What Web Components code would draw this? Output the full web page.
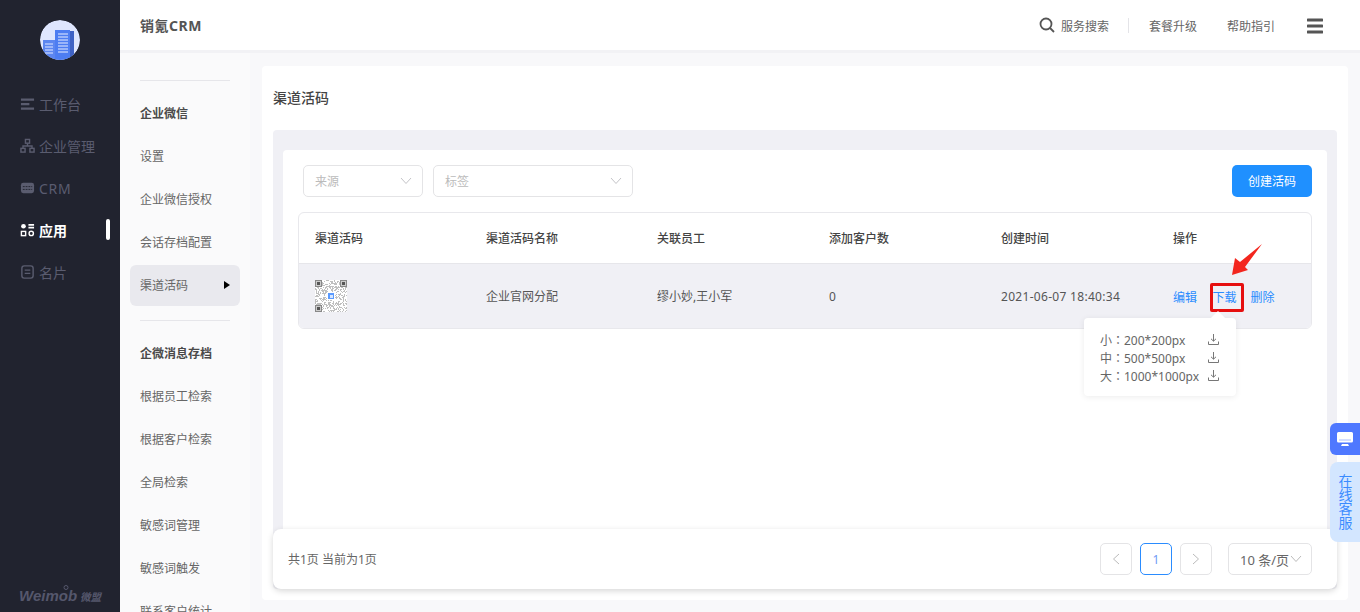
<!DOCTYPE html>
<html lang="zh-CN">
<head>
<meta charset="utf-8">
<title>渠道活码</title>
<style>
html, body { margin: 0; height: 612px; overflow: hidden; }
body { font-family: "Noto Sans", "Noto Sans CJK SC", sans-serif; font-size: 12px; color: #666; }
</style>
</head>
<body>
<crm-app></crm-app>
<script>
const navItems = [
    { text: "工作台", icon: '<path d="M1 2h14v2.4H1zM1 6.8h9v2.4H1zM1 11.600h14V14H1z" fill="currentColor"/>' },
    { text: "企业管理", icon: '<g fill="none" stroke="currentColor" stroke-width="1.5"><rect x="5.800" y="1" width="4.400" height="4"/><rect x="1" y="10.500" width="4.400" height="4"/><rect x="10.600" y="10.500" width="4.400" height="4"/><path d="M8 5v3M3.200 10.500V8h9.600v2.500"/></g>' },
    { text: "CRM", latin: true, icon: '<rect x="1" y="2.500" width="14" height="11" rx="2.500" fill="currentColor"/><path d="M3 6.500h10M3 9.500h10" stroke="#21232f" stroke-width="1" stroke-dasharray="2 1"/>' },
    { text: "应用", active: true, icon: '<g fill="none" stroke="currentColor" stroke-width="1.500"><rect x="1.500" y="9.500" width="4.500" height="4.500"/><circle cx="12" cy="11.700" r="2.300"/></g><circle cx="3.700" cy="4" r="2.500" fill="currentColor"/><path d="M9 2.500h6M9 5.500h6" stroke="currentColor" stroke-width="1.800"/>' },
    { text: "名片", icon: '<rect x="2" y="1.500" width="12" height="13" rx="2.500" fill="none" stroke="currentColor" stroke-width="1.500"/><path d="M5 6h6M5 9.500h6" stroke="currentColor" stroke-width="1.500"/>' }
];

class CrmSidebar extends HTMLElement {
    constructor() {
        super();
        this.attachShadow({ mode: 'open' });
        this.shadowRoot.innerHTML = `
            <style>
                :host { display: flex; flex-direction: column; width: 120px; flex: none; height: 612px; background: #21232f; position: relative; }
                .logo { width: 40px; height: 40px; margin: 20px 0 0 40px; border-radius: 50%; display: block; }
                nav { display: flex; flex-direction: column; margin-top: 23px; }
                .item { height: 42px; display: flex; align-items: center; gap: 4px; padding-left: 20px; color: #5a5c6f; font-size: 14px; position: relative; }
                .item svg { width: 15px; height: 16px; flex: none; }
                .latin { letter-spacing: .7px; }
                .active { color: #fff; font-weight: 700; }
                .active::after { content: ""; position: absolute; left: 106px; top: 10px; width: 4px; height: 21px; border-radius: 2px; background: #fff; }
                .brand { margin: auto 0 7px 19px; color: #55576c; display: flex; align-items: baseline; gap: 3px; font-style: italic; font-weight: 700; line-height: 16px; }
                .brand b { font-family: "Liberation Sans", sans-serif; font-size: 15px; }
                .brand span { font-size: 10.500px; }
                .drop { position: absolute; left: 63px; top: 584px; }
            </style>
            <svg class="logo" viewBox="0 0 40 40">
                <defs><clipPath id="c"><circle cx="20" cy="20" r="20"/></clipPath></defs>
                <g clip-path="url(#c)">
                    <rect width="40" height="40" fill="#dfe6fe"/>
                    <rect x="3" y="20" width="12" height="20" fill="#5c86f0"/>
                    <rect x="15" y="10" width="15" height="30" fill="#4d7df2"/>
                    <rect x="30" y="11" width="4" height="29" fill="#3f62c4"/>
                    <path d="M5 24h8M5 27h8M5 30h8M5 33h8M18 14h10M18 17h10M18 20h10M18 23h10M18 26h10M18 29h10M18 32h10" stroke="#b4c8fb" stroke-width="1.500"/>
                </g>
            </svg>
            <nav>${navItems.map(n => `
                <div class="item ${n.active ? 'active' : ''}"><svg viewBox="0 0 16 16">${n.icon}</svg><span class="${n.latin ? 'latin' : ''}">${n.text}</span></div>`).join('')}
            </nav>
            <div class="brand"><b>Weimob</b><span>微盟</span></div>
            <svg class="drop" width="6" height="6" viewBox="0 0 6 6" fill="none" stroke="#55576c"><circle cx="3" cy="3.500" r="2"/></svg>
        `;
    }
}

class CrmTopbar extends HTMLElement {
    constructor() {
        super();
        this.attachShadow({ mode: 'open' });
        this.shadowRoot.innerHTML = `
            <style>
                :host { display: flex; align-items: center; height: 50px; flex: none; background: #fff; border-bottom: 3px solid #f2f2f5; box-sizing: content-box; padding: 0 37px 0 20px; color: #666; }
                .name { font-size: 14px; font-weight: 700; color: #555; margin-right: auto; letter-spacing: .5px; margin-top: -1px; }
                .search { display: flex; align-items: center; gap: 6px; padding-right: 19px; border-right: 1px solid #e4e4e8; height: 15px; }
                .link { margin-left: 20px; }
                .link + .link { margin-left: 30px; }
                .search span, .link { position: relative; top: 1px; }
                .menu { width: 16px; height: 16px; margin-left: 32px; margin-top: 2px; }
                svg { display: block; }
            </style>
            <span class="name">销氪CRM</span>
            <div class="search">
                <svg width="16" height="16" viewBox="0 0 16 16" fill="none" stroke="#555" stroke-width="1.800"><circle cx="7" cy="7" r="5.500"/><path d="M11 11l4 4"/></svg>
                <span>服务搜索</span>
            </div>
            <span class="link">套餐升级</span>
            <span class="link">帮助指引</span>
            <svg class="menu" viewBox="0 0 16 16"><path d="M1 2h14M1 8h14M1 14h14" stroke="#555" stroke-width="3" stroke-linecap="round"/></svg>
        `;
    }
}

class CrmSubmenu extends HTMLElement {
    constructor() {
        super();
        const groups = [
            ["企业微信", "设置", "企业微信授权", "会话存档配置", "渠道活码"],
            ["企微消息存档", "根据员工检索", "根据客户检索", "全局检索", "敏感词管理", "敏感词触发", "联系客户统计"]
        ];
        this.attachShadow({ mode: 'open' });
        this.shadowRoot.innerHTML = `
            <style>
                :host { display: block; width: 130px; flex: none; background: #fafafb; padding-top: 27px; overflow: hidden; box-sizing: border-box; }
                .line { height: 1px; background: #e6e6ea; margin: 0 20px 10px 20px; }
                .line.second { margin-top: 14px; }
                .row { height: 43px; display: flex; align-items: center; margin: 0 10px; padding: 0 10px; color: #666; border-radius: 6px; white-space: nowrap; }
                .head { font-weight: 700; color: #4a4a4a; }
                .current { background: #e9e9ee; justify-content: space-between; height: 41px; margin: 2px 10px 0; padding-bottom: 2px; box-sizing: border-box; }
                .current::after { content: ""; border-left: 6px solid #000; border-top: 4px solid transparent; border-bottom: 4px solid transparent; }
            </style>
            ${groups.map((g, gi) => `
                <div class="line ${gi ? 'second' : ''}"></div>
                ${g.map((t, i) => `<div class="row ${i == 0 ? 'head' : ''} ${t == '渠道活码' ? 'current' : ''}">${t}</div>`).join('')}
            `).join('')}
        `;
    }
}

class CrmSelect extends HTMLElement {
    constructor() {
        super();
        this.attachShadow({ mode: 'open' });
        this.shadowRoot.innerHTML = `
            <style>
                :host { display: flex; align-items: center; justify-content: space-between; box-sizing: border-box; height: 32px; padding: 0 10px 0 11px; border: 1px solid #e4e4e6; border-radius: 5px; background: #fff; color: #bbb; }
            </style>
            <span><slot></slot></span>
            <svg width="12" height="8" viewBox="0 0 12 8" fill="none" stroke="#c4c4c8" stroke-width="1"><path d="M1 1l5 5.500L11 1"/></svg>
        `;
    }
}

class QrThumb extends HTMLElement {
    constructor() {
        super();
        this.attachShadow({ mode: 'open' });
        // pseudo random modules, the reference is too small to read a real code
        let cells = '';
        let seed = 7;
        for (let y = 0; y < 32; y++) {
            for (let x = 0; x < 32; x++) {
                seed = (seed * 1103515245 + 12345) & 0x7fffffff;
                if ((seed >> 16) % 100 < 42) cells += `<rect x="${x}" y="${y}" width="1" height="1" fill="#8a8a8a"/>`;
            }
        }
        const eye = (x, y) => `<rect x="${x}" y="${y}" width="7" height="7" fill="#888"/><rect x="${x + 1}" y="${y + 1}" width="5" height="5" fill="#ccc"/><rect x="${x + 2}" y="${y + 2}" width="3" height="3" fill="#555"/>`;
        this.shadowRoot.innerHTML = `
            <style>:host { display: block; width: 32px; height: 32px; background: #fff; } svg { display: block; filter: blur(.6px); }</style>
            <svg width="32" height="32" viewBox="0 0 32 32" shape-rendering="crispEdges">
                <g opacity=".55">${cells}</g>
                ${eye(0, 0)}${eye(25, 0)}${eye(0, 25)}
                <rect x="12" y="12" width="8" height="8" fill="#fff"/>
                <rect x="13" y="13" width="6" height="6" fill="#5b9bff"/>
                <rect x="14.500" y="14.500" width="3" height="3" fill="#d6e6ff"/>
            </svg>
        `;
    }
}

class ChannelTable extends HTMLElement {
    constructor() {
        super();
        const heads = ["渠道活码", "渠道活码名称", "关联员工", "添加客户数", "创建时间", "操作"];
        this.attachShadow({ mode: 'open' });
        this.shadowRoot.innerHTML = `
            <style>
                :host { display: block; border: 1px solid #e8e8ec; border-radius: 6px; overflow: hidden; background: #fff; }
                .grid { display: grid; grid-template-columns: 171px 171px 172px 172px 172px 1fr; padding-left: 16px; align-items: center; }
                .head { height: 50px; border-bottom: 1px solid #e6e6ea; color: #444; font-weight: 500; }
                .body { height: 64px; background: #f0f0f5; color: #555; }
                .time { letter-spacing: .3px; }
                .ops { display: flex; gap: 16px; color: #2a8cff; position: relative; top: .5px; }
                .ops span + span { margin-left: -.5px; }
                .ops span + span + span { margin-left: -2px; }
            </style>
            <div class="grid head">${heads.map(h => `<span>${h}</span>`).join('')}</div>
            <div class="grid body">
                <qr-thumb></qr-thumb>
                <span>企业官网分配</span>
                <span>缪小妙,王小军</span>
                <span>0</span>
                <span class="time">2021-06-07 18:40:34</span>
                <div class="ops"><span>编辑</span><span>下载</span><span>删除</span></div>
            </div>
        `;
    }
}

class DownloadPop extends HTMLElement {
    constructor() {
        super();
        const sizes = ["小：200*200px", "中：500*500px", "大：1000*1000px"];
        const icon = '<svg width="11" height="11" viewBox="0 0 11 11" fill="none" stroke="#777" stroke-width="1"><path d="M5.500 0v7M3 4.800l2.500 2.400L8 4.800M.5 7.500v3h10v-3"/></svg>';
        this.attachShadow({ mode: 'open' });
        this.shadowRoot.innerHTML = `
            <style>
                :host { position: absolute; left: 1084px; top: 318px; width: 152px; height: 78px; box-sizing: border-box; padding: 13px 17px 13px 16px; background: #fff; border-radius: 4px; box-shadow: 0 1px 6px rgba(0,0,0,.08); color: #666; font-family: "Noto Sans", "Noto Sans CJK TC", sans-serif; }
                :host::before { content: ""; position: absolute; left: 129px; top: -5px; width: 10px; height: 10px; background: #fff; transform: rotate(45deg); }
                .row { position: relative; height: 18px; display: flex; align-items: center; justify-content: space-between; white-space: nowrap; }
                svg { margin-top: -2px; }
            </style>
            ${sizes.map(s => `<div class="row" lang="zh-TW"><span>${s}</span>${icon}</div>`).join('')}
        `;
    }
}

class PagerBar extends HTMLElement {
    constructor() {
        super();
        this.attachShadow({ mode: 'open' });
        this.shadowRoot.innerHTML = `
            <style>
                :host { position: absolute; left: 273px; top: 529px; width: 1064px; height: 60px; box-sizing: border-box; padding: 0 25px 0 15px; display: flex; align-items: center; background: #fff; border-radius: 8px; box-shadow: 0 2px 6px rgba(0,0,0,.16); color: #666; }
                .total { margin-right: auto; }
                .btn { width: 32px; height: 32px; box-sizing: border-box; border: 1px solid #e4e4e6; border-radius: 5px; display: flex; align-items: center; justify-content: center; margin-left: 8px; }
                .on { border-color: #2a8cff; color: #6f9bf5; }
                .size { width: 84px; margin-left: 16px; gap: 1px; font-size: 13px; padding-left: 2px; }
            </style>
            <span class="total">共1页 当前为1页</span>
            <div class="btn"><svg width="8" height="12" viewBox="0 0 8 12" fill="none" stroke="#bbb"><path d="M7 1L1.500 6 7 11"/></svg></div>
            <div class="btn on">1</div>
            <div class="btn"><svg width="8" height="12" viewBox="0 0 8 12" fill="none" stroke="#bbb"><path d="M1 1l5.500 5L1 11"/></svg></div>
            <div class="btn size"><span>10 条/页</span><svg width="12" height="8" viewBox="0 0 12 8" fill="none" stroke="#bbb"><path d="M1 1l5 5.500L11 1"/></svg></div>
        `;
    }
}

class ServiceFloat extends HTMLElement {
    constructor() {
        super();
        this.attachShadow({ mode: 'open' });
        this.shadowRoot.innerHTML = `
            <style>
                :host { position: absolute; right: 0; top: 423px; width: 30px; display: flex; flex-direction: column; gap: 7px; }
                .top { height: 32px; background: #4f78ff; border-radius: 6px 0 0 6px; display: flex; align-items: center; justify-content: center; }
                .txt { height: 80px; background: #d3e6ff; border-radius: 8px 0 0 8px; color: #3a8bff; font-size: 14px; line-height: 14px; display: flex; align-items: center; justify-content: center; text-align: center; padding-left: 1px; box-sizing: border-box; width: 30px; }
                .txt span { width: 14px; }
            </style>
            <div class="top"><svg width="16" height="14" viewBox="0 0 16 14"><path d="M1.500 0h13A1.500 1.500 0 0 1 16 1.500V9a1.500 1.500 0 0 1-1.500 1.500h-13A1.500 1.500 0 0 1 0 9V1.500A1.500 1.500 0 0 1 1.500 0z" fill="#fff"/><path d="M5 12h6l1 2H4z" fill="#fff"/><path d="M2 8h12" stroke="#a9bcff"/></svg></div>
            <div class="txt"><span>在线客服</span></div>
        `;
    }
}

class CrmApp extends HTMLElement {
    constructor() {
        super();
        this.attachShadow({ mode: 'open' });
        this.shadowRoot.innerHTML = `
            <style>
                :host { display: flex; width: 1360px; height: 612px; overflow: hidden; position: relative; }
                .right { flex: 1; display: flex; flex-direction: column; min-width: 0; }
                .under { flex: 1; display: flex; min-height: 0; }
                main { flex: 1; background: #f8f8fa; padding: 13px 12px 12px; display: flex; min-width: 0; }
                .card { flex: 1; background: #fff; border-radius: 4px; padding: 0 11px 11px; display: flex; flex-direction: column; }
                h2 { margin: 0; height: 64px; line-height: 64px; font-size: 14px; font-weight: 500; color: #444; flex: none; }
                .gray { flex: 1; background: #f0f0f5; border-radius: 4px; padding: 20px 10px 0; display: flex; }
                .inner { flex: 1; background: #fff; border-radius: 4px 4px 0 0; padding: 15px 15px 0; }
                .bar { display: flex; gap: 10px; padding: 0 0 15px 5px; }
                .bar crm-select:nth-child(1) { width: 120px; }
                .bar crm-select:nth-child(2) { width: 200px; }
                .create { margin-left: auto; width: 80px; height: 32px; background: #1f90ff; color: #fff; border-radius: 5px; display: flex; align-items: center; justify-content: center; }
                .mark { position: absolute; left: 1210px; top: 283px; width: 34px; height: 29px; box-sizing: border-box; border: 3px solid #e60f0f; border-radius: 2px; }
                .arrow { position: absolute; left: 1230px; top: 243px; }
            </style>
            <crm-sidebar></crm-sidebar>
            <div class="right">
                <crm-topbar></crm-topbar>
                <div class="under">
                    <crm-submenu></crm-submenu>
                    <main>
                        <div class="card">
                            <h2>渠道活码</h2>
                            <div class="gray">
                                <div class="inner">
                                    <div class="bar">
                                        <crm-select>来源</crm-select>
                                        <crm-select>标签</crm-select>
                                        <div class="create">创建活码</div>
                                    </div>
                                    <channel-table></channel-table>
                                </div>
                            </div>
                        </div>
                    </main>
                </div>
            </div>
            <div class="mark"></div>
            <svg class="arrow" width="34" height="34" viewBox="0 0 34 34"><path d="M2 32L5 15l5 4L32 1 15 24l3 3z" fill="#f3261e"/></svg>
            <download-pop></download-pop>
            <pager-bar></pager-bar>
            <service-float></service-float>
        `;
    }
}

customElements.define('crm-sidebar', CrmSidebar);
customElements.define('crm-topbar', CrmTopbar);
customElements.define('crm-submenu', CrmSubmenu);
customElements.define('crm-select', CrmSelect);
customElements.define('qr-thumb', QrThumb);
customElements.define('channel-table', ChannelTable);
customElements.define('download-pop', DownloadPop);
customElements.define('pager-bar', PagerBar);
customElements.define('service-float', ServiceFloat);
customElements.define('crm-app', CrmApp);
</script>
</body>
</html>
